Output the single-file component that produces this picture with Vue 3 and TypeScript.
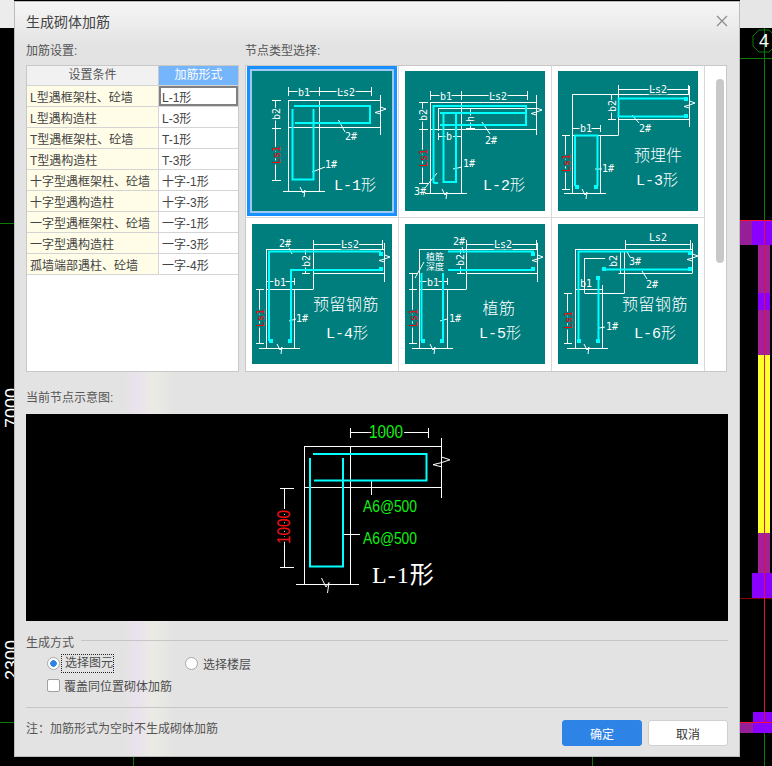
<script setup lang="ts">
interface Label {
  t: string
  x: number
  y: number
  size?: number
  rot?: boolean
  kind?: 'dim' | 'red' | 'big'
  spacing?: number
}

interface Thumb {
  id: number
  white: string
  cyan: string
  hooks: number[][]
  labels: Label[]
}

const h = (x1: number, x2: number, y: number) => `M${x1} ${y}H${x2}`
const v = (x: number, y1: number, y2: number) => `M${x} ${y1}V${y2}`
const seg = (x1: number, y1: number, x2: number, y2: number) => `M${x1} ${y1}L${x2} ${y2}`
// little zigzag where a wall is cut off
const breakBottom = (x: number, y: number, s = 1) =>
  `M${x - 3 * s} ${y - 4 * s}L${x} ${y + 2 * s}L${x + 2 * s} ${y - 1 * s}L${x + 1 * s} ${y + 6 * s}`
const breakRight = (x: number, y: number, a = 5.5, s = 1) =>
  `M${x} ${y}L${x + a} ${y + 2 * s}L${x} ${y + 4 * s}L${x - a} ${y + 5.5 * s}L${x} ${y + 7 * s}`

const settings = [
  ['L型遇框架柱、砼墙', 'L-1形'],
  ['L型遇构造柱', 'L-3形'],
  ['T型遇框架柱、砼墙', 'T-1形'],
  ['T型遇构造柱', 'T-3形'],
  ['十字型遇框架柱、砼墙', '十字-1形'],
  ['十字型遇构造柱', '十字-3形'],
  ['一字型遇框架柱、砼墙', '一字-1形'],
  ['一字型遇构造柱', '一字-3形'],
  ['孤墙端部遇柱、砼墙', '一字-4形'],
]

const thumbs: Thumb[] = [
  {
    id: 1,
    white: [
      h(36.5, 119.5, 20.5), v(36.5, 16, 25), v(67.5, 16, 25), v(119.5, 16, 25),
      h(36.5, 128.5, 29.5), h(36.5, 128.5, 56.5), v(36.5, 29, 120), v(67.5, 29, 120),
      v(128.5, 24, 64), h(31, 73, 120.5), breakBottom(51, 120), breakRight(128.5, 36),
      v(23.5, 29, 110), h(20, 29, 29.5), h(20, 29, 57.5), h(20, 29, 109.5),
      seg(86.5, 49, 93, 61), seg(60, 101, 73, 96),
    ].join(''),
    cyan: 'M42 35H118V52H43M40.5 38V108.5H61.5V38',
    hooks: [],
    labels: [
      { t: 'b1', x: 52, y: 21, kind: 'dim' },
      { t: 'Ls2', x: 94, y: 21, kind: 'dim' },
      { t: 'b2', x: 24, y: 43, rot: true, kind: 'dim' },
      { t: 'Ls1', x: 24, y: 84, rot: true, kind: 'red' },
      { t: '2#', x: 99, y: 65 },
      { t: '1#', x: 79, y: 93 },
      { t: 'L-1形', x: 103, y: 115, size: 15, kind: 'big' },
    ],
  },
  {
    id: 2,
    white: [
      h(25.5, 122.5, 24.5), v(25.5, 20, 29), v(56.5, 20, 29), v(122.5, 20, 29),
      h(25.5, 131.5, 31.5), h(25.5, 131.5, 58.5), h(33.5, 131.5, 37.5), v(33.5, 37, 60),
      h(36.5, 60, 41.5), v(25.5, 31, 122), v(56.5, 31, 122), v(131.5, 24, 64),
      h(20, 62, 122.5), breakBottom(40, 122), breakRight(131.5, 37),
      v(17.5, 31, 112), h(14, 23, 31.5), h(14, 23, 58.5), h(14, 23, 112.5),
      h(33.5, 56.5, 65.5), v(33.5, 62, 69), v(56.5, 62, 69),
      v(65.5, 37, 57), h(61, 70, 37.5), h(61, 70, 57.5),
      seg(77, 51, 85, 63), seg(48, 98, 57, 96), seg(32, 102, 20, 117),
    ].join(''),
    cyan: 'M28.5 112H33M28.5 112V35H121V54H35M38.5 41V111H51V41M35 42H120',
    hooks: [],
    labels: [
      { t: 'b1', x: 41, y: 25, kind: 'dim' },
      { t: 'Ls2', x: 93, y: 25, kind: 'dim' },
      { t: 'b2', x: 18, y: 44, rot: true, kind: 'dim' },
      { t: 'Ls1', x: 18, y: 87, rot: true, kind: 'red' },
      { t: 'b', x: 44, y: 65, kind: 'dim' },
      { t: 'h', x: 65, y: 48, rot: true, kind: 'dim' },
      { t: '2#', x: 86, y: 69 },
      { t: '1#', x: 64, y: 92 },
      { t: '3#', x: 15, y: 120 },
      { t: 'L-2形', x: 99, y: 115, size: 15, kind: 'big' },
    ],
  },
  {
    id: 3,
    white: [
      h(60.5, 130.5, 18.5), v(60.5, 14, 23), v(130.5, 14, 23),
      h(14.5, 131.5, 23.5), v(131.5, 15, 56), h(60.5, 131.5, 48.5), v(60.5, 23, 64),
      h(14.5, 60.5, 64.5), v(14.5, 23, 122), v(42.5, 64, 122), h(6, 48, 122.5),
      breakBottom(27, 122), breakRight(131.5, 30),
      h(14.5, 42.5, 57.5), v(14.5, 54, 61), v(42.5, 54, 61),
      v(7.5, 64, 118), h(4, 12, 64.5), h(4, 12, 118.5),
      v(53.5, 23, 48), h(50, 58, 48.5),
      seg(74, 44, 81, 52), seg(37, 98, 44, 98),
    ].join(''),
    cyan: 'M128 27.5H60.5V45.5H128M17 115V64.5H39.5V115',
    hooks: [[126, 26], [126, 43], [17, 114], [36, 114]],
    labels: [
      { t: 'Ls2', x: 100, y: 18, kind: 'dim' },
      { t: 'b1', x: 28, y: 57, kind: 'dim' },
      { t: 'b2', x: 54, y: 35, rot: true, kind: 'dim' },
      { t: 'Ls1', x: 8, y: 92, rot: true, kind: 'red' },
      { t: '2#', x: 87, y: 57 },
      { t: '1#', x: 50, y: 97 },
      { t: '预埋件', x: 100, y: 86, size: 16, kind: 'big' },
      { t: 'L-3形', x: 99, y: 110, size: 15, kind: 'big' },
    ],
  },
  {
    id: 4,
    white: [
      h(61.5, 130.5, 20.5), v(61.5, 16, 25), v(130.5, 16, 25),
      h(14.5, 132.5, 25.5), v(132.5, 19, 58), h(61.5, 132.5, 49.5), v(61.5, 25, 65),
      h(14.5, 61.5, 65.5), v(14.5, 25, 124), v(42.5, 65, 124), h(7, 48, 124.5),
      breakBottom(28, 124), breakRight(132.5, 31),
      h(14.5, 42.5, 57.5), v(14.5, 54, 61), v(42.5, 54, 61),
      v(7.5, 65, 119), h(4, 12, 65.5), h(4, 12, 119.5),
      v(53.5, 25, 49), h(50, 58, 49.5),
      seg(37, 97, 44, 95), seg(37, 24, 40, 30),
    ].join(''),
    cyan: 'M17 117V27.5H129M39 117V46H129',
    hooks: [[17, 115], [36, 115], [127, 28], [127, 43]],
    labels: [
      { t: 'Ls2', x: 98, y: 20, kind: 'dim' },
      { t: 'b1', x: 28, y: 58, kind: 'dim' },
      { t: 'b2', x: 54, y: 37, rot: true, kind: 'dim' },
      { t: 'Ls1', x: 8, y: 94, rot: true, kind: 'red' },
      { t: '2#', x: 33, y: 19 },
      { t: '1#', x: 50, y: 94 },
      { t: '预留钢筋', x: 94, y: 82, size: 16, kind: 'big', spacing: 0.5 },
      { t: 'L-4形', x: 95, y: 110, size: 15, kind: 'big' },
    ],
  },
  {
    id: 5,
    white: [
      h(61.5, 131.5, 20.5), v(61.5, 16, 25), v(131.5, 16, 25),
      h(14.5, 132.5, 25.5), v(132.5, 19, 58), h(61.5, 132.5, 49.5), v(61.5, 25, 65),
      h(14.5, 61.5, 65.5), v(14.5, 25, 124), v(42.5, 65, 124), h(7, 48, 124.5),
      breakBottom(28, 124), breakRight(132.5, 31),
      h(14.5, 42.5, 57.5), v(14.5, 54, 61), v(42.5, 54, 61),
      v(7.5, 49, 119), h(4, 12, 49.5), h(4, 12, 65.5), h(4, 12, 119.5),
      v(55.5, 25, 49), h(52, 60, 49.5),
      seg(19, 38, 10, 54), seg(35, 97, 42, 95), seg(57, 23, 59, 29),
    ].join(''),
    cyan: 'M43 27.5H129M43 46H129M16.5 117V49M38 117V49',
    hooks: [[16, 115], [35, 115], [126, 28], [126, 43]],
    labels: [
      { t: 'Ls2', x: 98, y: 20, kind: 'dim' },
      { t: 'b1', x: 28, y: 58, kind: 'dim' },
      { t: 'b2', x: 55, y: 36, rot: true, kind: 'dim' },
      { t: 'Ls1', x: 8, y: 94, rot: true, kind: 'red' },
      { t: '2#', x: 54, y: 17 },
      { t: '1#', x: 50, y: 94 },
      { t: '植筋', x: 30, y: 33, size: 9 },
      { t: '深度', x: 30, y: 43, size: 9 },
      { t: '植筋', x: 94, y: 86, size: 16, kind: 'big', spacing: 0.5 },
      { t: 'L-5形', x: 95, y: 110, size: 15, kind: 'big' },
    ],
  },
  {
    id: 6,
    white: [
      h(67.5, 132.5, 20.5), v(67.5, 16, 25), v(132.5, 16, 25),
      h(17.5, 134.5, 25.5), v(134.5, 19, 49), h(60.5, 134.5, 49.5),
      v(66.5, 27, 69), h(26.5, 66.5, 69.5), v(26.5, 34, 69), h(26.5, 47, 34.5), v(62.5, 27, 49),
      v(17.5, 25, 124), v(44.5, 61, 124), h(17.5, 44.5, 65.5), h(9, 50, 124.5),
      breakBottom(29, 124), breakRight(134.5, 30),
      v(9.5, 69, 119), h(6, 14, 69.5), h(6, 14, 119.5),
      seg(69, 28, 72, 33), seg(84, 47, 89, 55), seg(41, 104, 47, 103),
    ].join(''),
    cyan: 'M20.5 117V27.5H133M40.5 117V53M45 45.5H133',
    hooks: [[19, 115], [38, 115], [38, 52], [130, 27], [130, 43], [44, 43]],
    labels: [
      { t: 'Ls2', x: 100, y: 13 },
      { t: 'b1', x: 28, y: 59 },
      { t: 'b2', x: 55, y: 37, rot: true, kind: 'dim' },
      { t: 'Ls1', x: 10, y: 96, rot: true, kind: 'red' },
      { t: '3#', x: 77, y: 37 },
      { t: '2#', x: 94, y: 60 },
      { t: '1#', x: 54, y: 102 },
      { t: '预留钢筋', x: 97, y: 82, size: 16, kind: 'big', spacing: 0.5 },
      { t: 'L-6形', x: 97, y: 110, size: 15, kind: 'big' },
    ],
  },
]

const previewWhite = [
  h(324.5, 402.5, 18.5), v(324.5, 14, 24), v(402.5, 14, 24),
  h(278.5, 415.5, 32.5), h(278.5, 415.5, 73.5), v(278.5, 32, 170), v(324.5, 32, 170),
  v(415.5, 24, 84), h(270, 333, 170.5), breakBottom(300, 170, 1.5), breakRight(415.5, 43, 8.5, 1.4),
  v(258.5, 74, 153), h(254, 268, 74.5), h(254, 268, 153.5),
  v(345.5, 67, 81), h(317, 334, 120.5),
].join('')
const previewCyan = 'M287 40H400.5V66.5H288M284 44V152.5H317V44'
</script>

<template>
  <div class="page">
    <svg class="canvas" width="772" height="766" viewBox="0 0 772 766">
      <rect x="0" y="0" width="14" height="28" fill="#ececec" />
      <rect x="740" y="0" width="32" height="28" fill="#e6e6e6" />
      <g fill="none" stroke="#0b7a0b">
        <path d="M0 223.5H14M0 722.5H14M740 58.5H772M764.5 28V222M764.5 733V766M133.5 757V766M592.5 757V766" />
        <path d="M759 30L769 30L775 36L775 46L769 52L759 52L753 46L753 36Z" />
      </g>
      <text x="764" y="47" class="canvas-num" text-anchor="middle">4</text>
      <text class="canvas-num" transform="translate(18 428) rotate(-90)">7000</text>
      <text class="canvas-num" transform="translate(18 680) rotate(-90)">2300</text>
      <g>
        <rect x="740" y="221" width="12" height="24" fill="#961e96" />
        <rect x="752" y="221" width="20" height="24" fill="#8a00ff" />
        <rect x="758" y="245" width="12" height="48" fill="#a3209a" />
        <rect x="758" y="293" width="12" height="17" fill="#8a00ff" />
        <rect x="758" y="310" width="12" height="45" fill="#a3209a" />
        <rect x="758" y="355" width="12" height="178" fill="#ffff2a" />
        <rect x="758" y="533" width="12" height="40" fill="#a3209a" />
        <rect x="752" y="573" width="20" height="25" fill="#8a00ff" />
        <rect x="753" y="712" width="19" height="21" fill="#8a00ff" />
        <rect x="740" y="722" width="13" height="11" fill="#961e96" />
      </g>
      <path d="M740 220.5H772M740 722.5H772" stroke="#ff1030" fill="none" />
      <path d="M740 598.5H772" stroke="#8b0000" fill="none" />
      <path d="M764.5 220V722" stroke="#e0103a" fill="none" />
    </svg>

    <div class="dialog">
      <div class="title-bar">
        <span>生成砌体加筋</span>
        <svg class="close" width="12" height="12" viewBox="0 0 12 12">
          <path d="M1 1L11 11M11 1L1 11" stroke="#8a8a8a" stroke-width="1.2" fill="none" />
        </svg>
      </div>

      <div class="top">
        <div class="left-col">
          <div class="caption">加筋设置:</div>
          <div class="table-box">
            <table>
              <thead>
                <tr>
                  <th class="cond">设置条件</th>
                  <th class="form">加筋形式</th>
                </tr>
              </thead>
              <tbody>
                <tr v-for="(row, idx) in settings" :key="idx">
                  <td class="cond">{{ row[0] }}</td>
                  <td class="form" :class="{ current: idx === 0 }">{{ row[1] }}</td>
                </tr>
              </tbody>
            </table>
          </div>
        </div>

        <div class="right-col">
          <div class="caption">节点类型选择:</div>
          <div class="thumb-box">
            <div class="thumb-grid">
              <div class="thumb" v-for="item in thumbs" :key="item.id">
                <svg class="panel" :class="{ selected: item.id === 1 }" width="140" height="140" viewBox="0 0 140 140">
                  <path :d="item.white" class="line" />
                  <path :d="item.cyan" class="rebar" />
                  <rect v-for="(hook, i) in item.hooks" :key="i" :x="hook[0]" :y="hook[1]" width="4" height="4" fill="#00ffff" />
                  <text
                    v-for="label in item.labels"
                    :key="label.t + label.x"
                    :x="label.x"
                    :y="label.y"
                    :font-size="label.size || 10"
                    :letter-spacing="label.spacing || 0"
                    :class="label.kind"
                    :transform="label.rot ? `rotate(-90 ${label.x} ${label.y})` : undefined"
                    text-anchor="middle"
                    dominant-baseline="central"
                  >{{ label.t }}</text>
                </svg>
              </div>
            </div>
            <div class="scroll-track"><div class="scroll-thumb"></div></div>
          </div>
        </div>
      </div>

      <div class="caption preview-caption">当前节点示意图:</div>
      <svg class="preview" width="702" height="207" viewBox="0 0 702 207">
        <path :d="previewWhite" class="line" />
        <path :d="previewCyan" class="rebar" />
        <text x="360" y="18" class="pv green" font-size="18" textLength="34" lengthAdjust="spacingAndGlyphs" text-anchor="middle" dominant-baseline="central">1000</text>
        <text x="258" y="113" class="pv red-text" font-size="18" textLength="34" lengthAdjust="spacingAndGlyphs" text-anchor="middle" dominant-baseline="central" transform="rotate(-90 258 113)">1000</text>
        <text x="337" y="98" class="plain green" font-size="16" textLength="54" lengthAdjust="spacingAndGlyphs">A6@500</text>
        <text x="337" y="130" class="plain green" font-size="16" textLength="54" lengthAdjust="spacingAndGlyphs">A6@500</text>
        <text x="346" y="169" class="serif" font-size="24" letter-spacing="1">L-1形</text>
      </svg>

      <div class="legend">
        <span>生成方式</span>
        <i class="rule"></i>
      </div>
      <div class="radio-row">
        <label class="radio-item">
          <span class="radio on"></span>
          <span class="focus">选择图元</span>
        </label>
        <label class="radio-item">
          <span class="radio"></span>
          <span>选择楼层</span>
        </label>
      </div>
      <label class="check-row">
        <span class="check"></span>
        <span>覆盖同位置砌体加筋</span>
      </label>
      <i class="rule full"></i>
      <div class="footer">
        <span class="note">注&#xFF1A;加筋形式为空时不生成砌体加筋</span>
        <div class="buttons">
          <button class="btn primary">确定</button>
          <button class="btn">取消</button>
        </div>
      </div>
    </div>
  </div>
</template>

<style scoped>
.page {
  position: relative;
  width: 772px;
  height: 766px;
  overflow: hidden;
  background: #000;
  font-family: "Liberation Sans", "Noto Sans CJK SC", sans-serif;
  font-size: 12px;
  color: #4c4c4c;
}

.canvas {
  position: absolute;
  left: 0;
  top: 0;
}

.canvas-num {
  fill: #fff;
  font-family: "Liberation Sans", sans-serif;
  font-size: 18px;
}

.dialog {
  position: absolute;
  left: 14px;
  top: 1px;
  width: 726px;
  height: 756px;
  box-sizing: border-box;
  padding: 0 11px;
  border: 1px solid #bcbcbc;
  background:
    linear-gradient(90deg, transparent 15%, rgba(236, 226, 240, 0.8) 17%, rgba(238, 238, 230, 0.7) 19%, transparent 22%) 0 370px / 100% 100% no-repeat,
    linear-gradient(#f6f6f6 0, #e3e3e3 44px);
}

.title-bar {
  display: flex;
  align-items: center;
  justify-content: space-between;
  height: 38px;
  font-size: 14px;
  color: #444;
}

.top {
  display: flex;
  gap: 6px;
  margin-top: 3px;
}

.left-col {
  width: 213px;
}

.right-col {
  width: 482px;
}

.caption {
  height: 16px;
  margin-bottom: 6px;
  line-height: 16px;
  color: #555;
}

.table-box {
  box-sizing: border-box;
  height: 307px;
  border: 1px solid #c8c8c8;
  background: #fff;
}

table {
  width: 211px;
  table-layout: fixed;
  border-collapse: separate;
  border-spacing: 0;
}

th {
  height: 19px;
  padding: 0;
  font-weight: 400;
  border-bottom: 1px solid #d4d4d4;
  line-height: 19px;
}

th.cond {
  width: 131px;
  background: #f1f1f1;
  border-right: 1px solid #c8c8c8;
  color: #555;
}

th.form {
  background: #75b5fb;
  color: #fff;
}

td {
  box-sizing: border-box;
  height: 21px;
  padding: 0 0 0 3px;
  border-bottom: 1px solid #d4d4d4;
  color: #444;
  white-space: nowrap;
}

td.cond {
  background: #fffde8;
  border-right: 1px solid #d4d4d4;
}

td.current {
  box-shadow: inset 0 0 0 2px #808080;
}

.thumb-box {
  box-sizing: border-box;
  display: flex;
  height: 307px;
  border: 1px solid #c8c8c8;
  background: #fff;
}

.thumb-grid {
  display: grid;
  grid-template-columns: repeat(3, 153px);
  grid-template-rows: 152px 153px;
  flex: none;
}

.thumb {
  box-sizing: border-box;
  display: flex;
  justify-content: center;
  padding: 5px 1px 0 0;
  border-right: 1px solid #d8d8d8;
  border-bottom: 1px solid #d8d8d8;
}

.thumb:nth-child(n + 4) {
  padding-top: 6px;
  border-bottom: none;
}

.panel {
  display: block;
  background: #007d7d;
}

.panel.selected {
  box-shadow: 0 0 0 2px #9fc9f5, 0 0 0 5px #1890ff;
}

.panel text {
  fill: #fff;
  font-family: "DejaVu Sans Mono", "Noto Sans CJK SC", monospace;
}

.panel text.dim {
  stroke: #007d7d;
  stroke-width: 3px;
  paint-order: stroke;
}

.panel text.red {
  fill: #ff0000;
  stroke: #007d7d;
  stroke-width: 3px;
  paint-order: stroke;
}

.panel text.big {
  font-family: "Liberation Mono", "Noto Sans CJK SC", monospace;
  font-weight: 300;
}

.line {
  fill: none;
  stroke: #fff;
  stroke-width: 1;
}

.rebar {
  fill: none;
  stroke: #00ffff;
  stroke-width: 2;
}

.scroll-track {
  flex: 1;
  display: flex;
  justify-content: center;
  padding: 13px 0 0 9px;
}

.scroll-thumb {
  width: 8px;
  height: 184px;
  border-radius: 4px;
  background: #c8c8c8;
}

.preview-caption {
  margin-top: 18px;
  margin-bottom: 8px;
}

.preview {
  display: block;
  background: #000;
}

.pv {
  font-family: "Liberation Sans", sans-serif;
  stroke: #000;
  stroke-width: 4px;
  paint-order: stroke;
}

.plain {
  font-family: "Liberation Sans", sans-serif;
}

.green {
  fill: #10f010;
}

.red-text {
  fill: #f01010;
}

.serif {
  fill: #fff;
  font-family: "Liberation Serif", "Noto Sans CJK SC", serif;
}

.legend {
  display: flex;
  align-items: center;
  gap: 7px;
  height: 16px;
  margin-top: 12px;
  color: #555;
}

.rule {
  flex: 1;
  display: block;
  height: 1px;
  margin-bottom: 2px;
  background: #c6c6c6;
}

.rule.full {
  margin-top: 12px;
  margin-bottom: 0;
}

.radio-row {
  display: flex;
  align-items: center;
  height: 20px;
  margin-top: 4px;
  padding-left: 21px;
}

.radio-item {
  display: flex;
  align-items: center;
  gap: 5px;
  width: 138px;
}

.radio {
  box-sizing: border-box;
  width: 13px;
  height: 13px;
  border: 1px solid #a8a8a8;
  border-radius: 50%;
  background: #fff;
}

.radio.on {
  background: radial-gradient(circle, #2e83e6 0 3px, #fff 3.6px);
}

.focus {
  margin-left: -3px;
  padding: 0 0 0 3px;
  outline: 1px dotted #222;
  line-height: 17px;
}

.check-row {
  display: flex;
  align-items: center;
  gap: 4px;
  height: 20px;
  margin-top: 2px;
  padding-left: 21px;
}

.check {
  box-sizing: border-box;
  width: 13px;
  height: 13px;
  border: 1px solid #a0a0a0;
  border-radius: 2px;
  background: #fff;
}

.footer {
  display: flex;
  align-items: flex-start;
  justify-content: space-between;
  margin-top: 12px;
  color: #555;
}

.note {
  line-height: 18px;
}

.buttons {
  display: flex;
  gap: 6px;
}

.btn {
  box-sizing: border-box;
  width: 80px;
  height: 26px;
  border: 1px solid #cfcfcf;
  border-radius: 3px;
  background: #fff;
  color: #333;
  font-family: inherit;
  font-size: 12px;
}

.btn.primary {
  border-color: #2e83e6;
  background: #2e83e6;
  color: #fff;
}
</style>
